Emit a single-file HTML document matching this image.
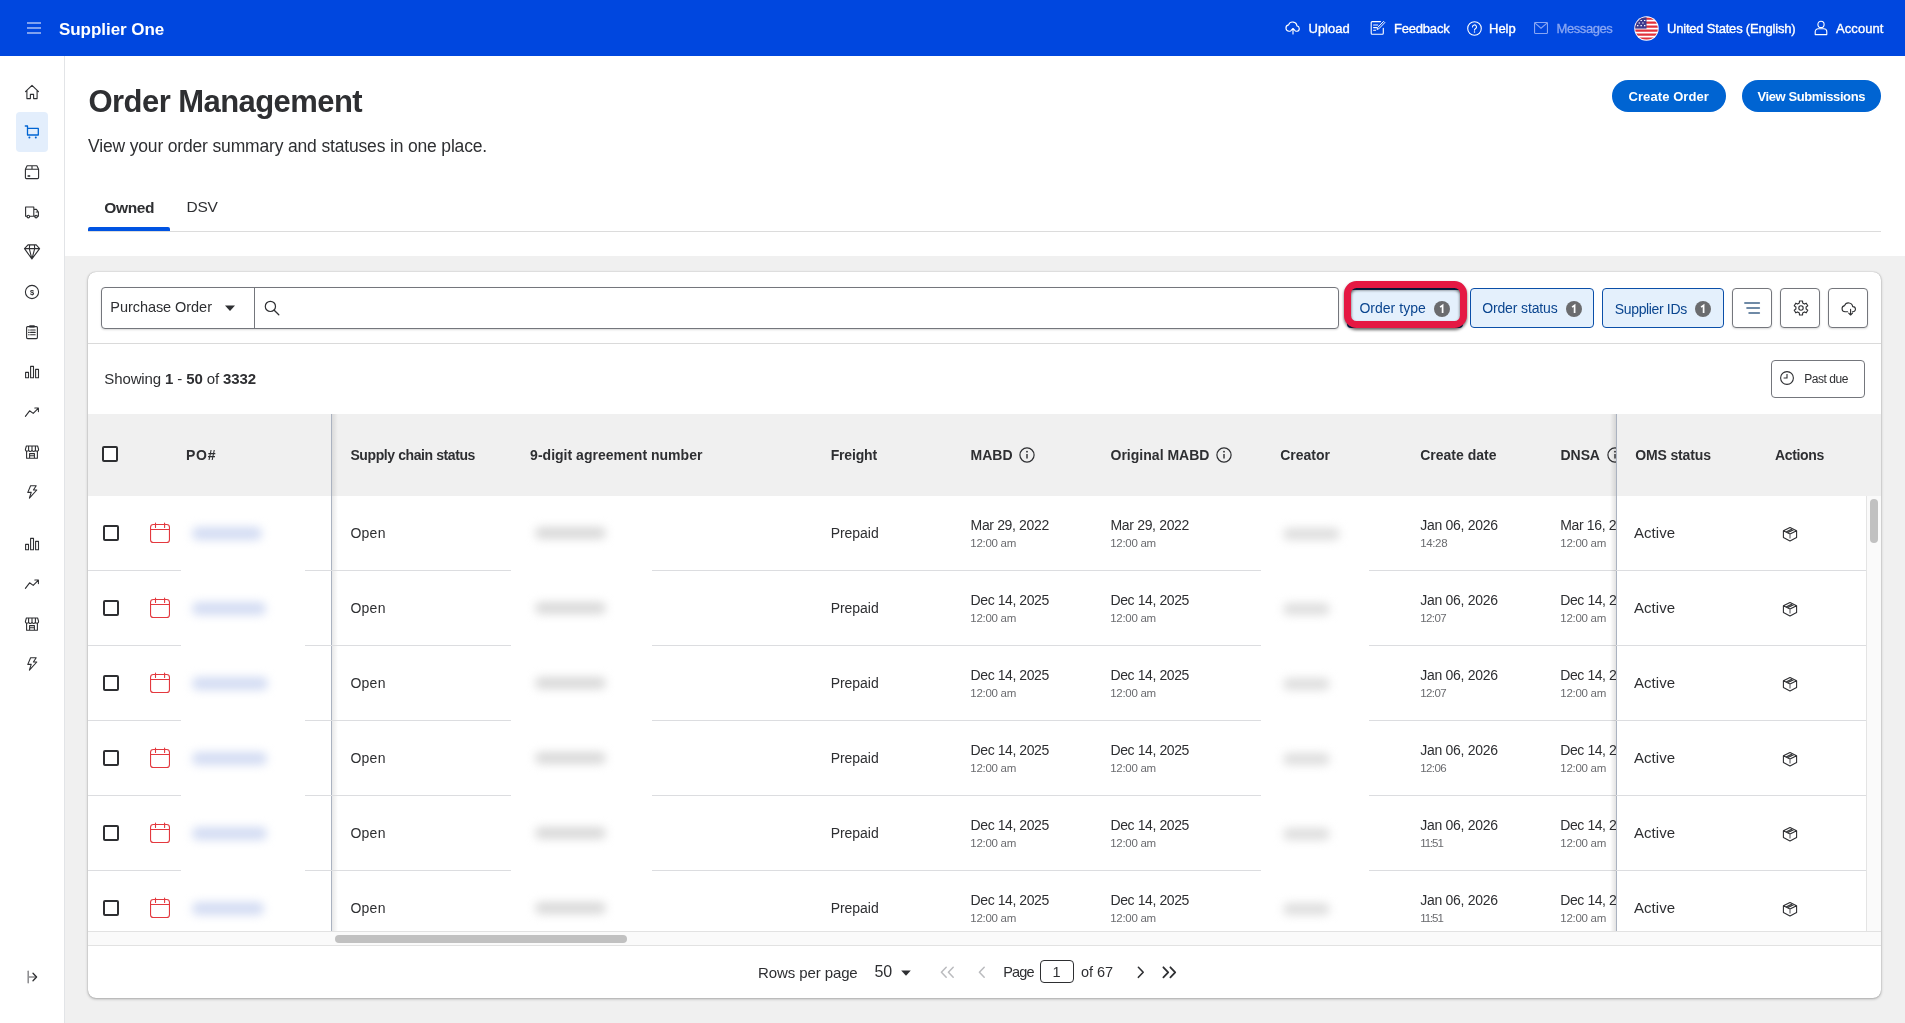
<!DOCTYPE html>
<html>
<head>
<meta charset="utf-8">
<title>Order Management</title>
<style>
*{box-sizing:border-box;margin:0;padding:0}
html,body{width:1905px;height:1023px;overflow:hidden;background:#fff}
body{font-family:"Liberation Sans",sans-serif;color:#2e2f32;position:relative;font-size:14px;line-height:1;will-change:transform}
.t{position:absolute;white-space:nowrap;line-height:1;display:block}
svg{position:absolute;display:block;overflow:visible}
#hdr{position:absolute;left:0;top:0;width:1905px;height:56px;background:#0047df}
#hdr .t{color:#fff}
#side{position:absolute;left:0;top:56px;width:65px;height:967px;background:#fff;border-right:1px solid #e2e4e7}
#grey{position:absolute;left:65px;top:256px;width:1840px;height:767px;background:#f0f0f0}
#card{position:absolute;left:88px;top:272px;width:1793px;height:726px;background:#fff;border-radius:8px;box-shadow:0 1px 3px rgba(0,0,0,.3),0 0 1px rgba(0,0,0,.32);overflow:hidden}
.pill{position:absolute;top:80px;height:32px;border-radius:16px;background:#0064d2}
.pill .t{color:#fff;font-weight:bold}
.chip{position:absolute;top:288px;height:40px;border:1px solid #0b4fa8;border-radius:4px;background:#e4f0fc}
.chip .t{color:#0b3f8c}
.badge{position:absolute;width:16px;height:16px;border-radius:8px;background:#4a4a4c;top:11px}
.ibtn{position:absolute;top:288px;width:40px;height:40px;border:1px solid #74767c;border-radius:4px;background:#fff;box-shadow:0 1px 2px rgba(0,0,0,.15)}
.cb{position:absolute;width:16px;height:16px;border:2px solid #2e2f32;border-radius:2px;background:#fff}
.hl{position:absolute;height:1px;background:#dcdde0}
.blur{position:absolute;filter:blur(5px);border-radius:6px}
.wipe{position:absolute;background:#fff}
</style>
</head>
<body>
<div id="hdr">
<svg style="left:27px;top:22px" width="14" height="12" viewBox="0 0 14 12"><path d="M0 1h14M0 6h14M0 11h14" stroke="#a9c0f5" stroke-width="1.3" fill="none"/></svg>
<div class="t" style="left:59px;top:20.6px;font-size:17px;font-weight:bold;letter-spacing:-0.05px">Supplier One</div>
<!-- upload -->
<svg style="left:1285px;top:21px" width="16" height="14" viewBox="0 0 16 14"><path d="M5.2 10.2H4.1a3.2 3.2 0 0 1-.5-6.35A4.3 4.3 0 0 1 11.9 4.9a2.7 2.7 0 0 1 .3 5.3h-1.4M8 13V7.5M5.900 9.600 8 7.500l2.100 2.100" stroke="#fff" stroke-width="1.15" fill="none" stroke-linecap="round" stroke-linejoin="round"/></svg>
<div class="t" style="left:1308.5px;top:22.4px;font-size:13px;-webkit-text-stroke:.35px #fff">Upload</div>
<!-- feedback -->
<svg style="left:1370px;top:20px" width="16" height="16" viewBox="0 0 16 16"><path d="M13.3 8.2v5a1 1 0 0 1-1 1H2.2a1 1 0 0 1-1-1V2.6a1 1 0 0 1 1-1h8.3M3.6 5h4.2M3.6 7.6h3M3.6 10.2h2" stroke="#fff" stroke-width="1.1" fill="none" stroke-linecap="round"/><path d="M13.6 1.4l1.2 1.2-6 6.2-1.8.6.6-1.8z" stroke="#fff" stroke-width="1" fill="none" stroke-linejoin="round"/></svg>
<div class="t" style="left:1394px;top:22.4px;font-size:13px;letter-spacing:-0.2px;-webkit-text-stroke:.35px #fff">Feedback</div>
<!-- help -->
<svg style="left:1466.5px;top:20.5px" width="15" height="15" viewBox="0 0 15 15"><circle cx="7.5" cy="7.5" r="6.8" stroke="#fff" stroke-width="1.1" fill="none"/><path d="M5.5 5.9a2 2 0 1 1 2.9 1.8c-.6.3-.9.7-.9 1.4" stroke="#fff" stroke-width="1.1" fill="none" stroke-linecap="round"/><circle cx="7.5" cy="11" r=".75" fill="#fff"/></svg>
<div class="t" style="left:1489px;top:22.4px;font-size:13px;-webkit-text-stroke:.35px #fff">Help</div>
<!-- messages -->
<svg style="left:1534px;top:22px" width="14" height="12" viewBox="0 0 14 12"><rect x=".55" y=".55" width="12.9" height="10.9" rx=".6" stroke="#88a6f3" stroke-width="1.1" fill="none"/><path d="M1 1.2l6 5 6-5" stroke="#88a6f3" stroke-width="1.1" fill="none"/></svg>
<div class="t" style="left:1556.5px;top:22.4px;font-size:13px;color:#88a6f3;letter-spacing:-0.42px;-webkit-text-stroke:.3px #88a6f3">Messages</div>
<!-- flag -->
<svg style="left:1634.3px;top:15.8px" width="25" height="25" viewBox="0 0 25 25"><defs><clipPath id="fc"><circle cx="12.5" cy="12.5" r="11.3"/></clipPath></defs><circle cx="12.5" cy="12.5" r="12.2" fill="#fff"/><g clip-path="url(#fc)"><rect width="25" height="25" fill="#fff"/><path d="M0 2.6h25M0 6.6h25M0 10.6h25M0 14.6h25M0 18.6h25M0 22.6h25" stroke="#e0323c" stroke-width="2.2"/><rect x="0" y="0" width="12.5" height="12.6" fill="#3c3b8e"/><path d="M3 4.5h1.4M6.5 4.5h1.4M10 4.5h1.4M4.6 7h1.4M8.2 7h1.4M3 9.6h1.4M6.5 9.6h1.4M10 9.6h1.4" stroke="#fff" stroke-width="1.2"/></g></svg>
<div class="t" style="left:1667px;top:22.4px;font-size:13px;letter-spacing:-0.2px;-webkit-text-stroke:.35px #fff">United States (English)</div>
<!-- account -->
<svg style="left:1814px;top:20px" width="14" height="16" viewBox="0 0 14 16"><circle cx="7" cy="4.4" r="3.1" stroke="#fff" stroke-width="1.1" fill="none"/><path d="M1.2 14.6v-2.8a3 3 0 0 1 3-3h5.6a3 3 0 0 1 3 3v2.8z" stroke="#fff" stroke-width="1.1" fill="none" stroke-linejoin="round"/></svg>
<div class="t" style="left:1836px;top:22.4px;font-size:13px;letter-spacing:.08px;-webkit-text-stroke:.35px #fff">Account</div>
</div>

<div id="side">
<div style="position:absolute;left:16px;top:56px;width:32px;height:40px;border-radius:4px;background:#e3eefc"></div>
<svg style="left:24.0px;top:28.0px" width="16" height="16" viewBox="0 0 16 16"><path d="M1.5 7.6 8 1.4l6.5 6.2M2.9 6.6v8h3.5v-4.2h3.2v4.2h3.5v-8" stroke="#2e2f32" stroke-width="1.1" fill="none" stroke-linecap="round" stroke-linejoin="round"/></svg>
<svg style="left:24.0px;top:68.0px" width="16" height="16" viewBox="0 0 16 16"><path d="M1.3 2h2.2v9h10.8V4.4H3.5" stroke="#0064d2" stroke-width="1.3" fill="none" stroke-linejoin="round" stroke-linecap="round"/><circle cx="5.4" cy="13.6" r="1" fill="#0064d2"/><circle cx="11.8" cy="13.6" r="1" fill="#0064d2"/></svg>
<svg style="left:24.0px;top:108.0px" width="16" height="16" viewBox="0 0 16 16"><path d="M1.4 5.2h13.2v8.4a1 1 0 0 1-1 1H2.4a1 1 0 0 1-1-1zM1.4 5.2l1.7-3.4h9.8l1.7 3.4M8 1.8v3.4" stroke="#2e2f32" stroke-width="1.1" fill="none" stroke-linecap="round" stroke-linejoin="round"/><path d="M3.6 12h2.6" stroke="#2e2f32" stroke-width="1.6"/></svg>
<svg style="left:24.0px;top:148.0px" width="16" height="16" viewBox="0 0 16 16"><path d="M3 12.2H1.6V3h8.2v9.2H5.6M9.8 5.4h2.6l2 2.6v4.2h-1.2M9.8 12.2h1.2M12.2 8h2" stroke="#2e2f32" stroke-width="1.1" fill="none" stroke-linecap="round" stroke-linejoin="round"/><circle cx="4.3" cy="12.6" r="1.3" stroke="#2e2f32" stroke-width="1.1" fill="none" stroke-linecap="round" stroke-linejoin="round"/><circle cx="12.1" cy="12.6" r="1.3" stroke="#2e2f32" stroke-width="1.1" fill="none" stroke-linecap="round" stroke-linejoin="round"/></svg>
<svg style="left:24.0px;top:188.0px" width="16" height="16" viewBox="0 0 16 16"><path d="M4 .9h8.200l3.400 3.700L7.900 15 .5 4.600zM.5 4.600h15.100M5.700 .9 5.300 4.600 7.900 15 10.700 4.600 10.400 .9" stroke="#2e2f32" stroke-width="1.1" fill="none" stroke-linecap="round" stroke-linejoin="round"/></svg>
<svg style="left:24.0px;top:228.0px" width="16" height="16" viewBox="0 0 16 16"><circle cx="8" cy="8" r="6.6" stroke="#2e2f32" stroke-width="1.1" fill="none" stroke-linecap="round" stroke-linejoin="round"/><text x="8" y="10.7" font-size="7.5" font-weight="bold" text-anchor="middle" fill="#2e2f32" font-family="Liberation Sans">$</text></svg>
<svg style="left:24.0px;top:268.0px" width="16" height="16" viewBox="0 0 16 16"><rect x="2.6" y="2.6" width="10.8" height="12" rx="1" stroke="#2e2f32" stroke-width="1.1" fill="none" stroke-linecap="round" stroke-linejoin="round"/><path d="M5.6 1.6h4.8v1.6H5.6z" fill="#2e2f32" stroke="#2e2f32" stroke-width=".6"/><path d="M6.6 6h4.6M6.6 8.4h4.6M6.6 10.8h4.6" stroke="#2e2f32" stroke-width="1.1" fill="none" stroke-linecap="round" stroke-linejoin="round"/><path d="M4.6 6h.6M4.6 8.4h.6M4.6 10.8h.6" stroke="#2e2f32" stroke-width="1.1" fill="none" stroke-linecap="round" stroke-linejoin="round"/></svg>
<svg style="left:24.0px;top:308.0px" width="16" height="16" viewBox="0 0 16 16"><rect x="1.6" y="8.4" width="2.9" height="5.4" stroke="#2e2f32" stroke-width="1.1" fill="none" stroke-linecap="round" stroke-linejoin="round"/><rect x="6.6" y="2.4" width="2.9" height="11.4" stroke="#2e2f32" stroke-width="1.1" fill="none" stroke-linecap="round" stroke-linejoin="round"/><rect x="11.6" y="5.4" width="2.9" height="8.4" stroke="#2e2f32" stroke-width="1.1" fill="none" stroke-linecap="round" stroke-linejoin="round"/></svg>
<svg style="left:24.0px;top:348.0px" width="16" height="16" viewBox="0 0 16 16"><path d="M1.4 12.4l4.2-5.6 3.6 2.6 5-5M10.8 4h3.6v3.6" stroke="#2e2f32" stroke-width="1.1" fill="none" stroke-linecap="round" stroke-linejoin="round"/></svg>
<svg style="left:24.0px;top:388.0px" width="16" height="16" viewBox="0 0 16 16"><path d="M2.6 7.2v7h10.8v-7M5.6 14.2V9.6h4.8v4.6M5.6 11.8h4.8" stroke="#2e2f32" stroke-width="1.1" fill="none" stroke-linecap="round" stroke-linejoin="round"/><path d="M2.4 2h11.2l1 3.4a1.6 1.6 0 0 1-3.2.4 1.7 1.7 0 0 1-3.4 0 1.7 1.7 0 0 1-3.4 0 1.6 1.6 0 0 1-3.2-.4zM4.6 2v3.6M8 2v3.6M11.4 2v3.6" stroke="#2e2f32" stroke-width="1.1" fill="none" stroke-linecap="round" stroke-linejoin="round"/></svg>
<svg style="left:24.0px;top:428.0px" width="16" height="16" viewBox="0 0 16 16"><path d="M6.6 1.8h5.6L9.4 6h3.4L5.4 14.2l1.8-5.8H3.8z" stroke="#2e2f32" stroke-width="1.1" fill="none" stroke-linecap="round" stroke-linejoin="round"/></svg>
<svg style="left:24.0px;top:480.0px" width="16" height="16" viewBox="0 0 16 16"><rect x="1.6" y="8.4" width="2.9" height="5.4" stroke="#2e2f32" stroke-width="1.1" fill="none" stroke-linecap="round" stroke-linejoin="round"/><rect x="6.6" y="2.4" width="2.9" height="11.4" stroke="#2e2f32" stroke-width="1.1" fill="none" stroke-linecap="round" stroke-linejoin="round"/><rect x="11.6" y="5.4" width="2.9" height="8.4" stroke="#2e2f32" stroke-width="1.1" fill="none" stroke-linecap="round" stroke-linejoin="round"/></svg>
<svg style="left:24.0px;top:520.0px" width="16" height="16" viewBox="0 0 16 16"><path d="M1.4 12.4l4.2-5.6 3.6 2.6 5-5M10.8 4h3.6v3.6" stroke="#2e2f32" stroke-width="1.1" fill="none" stroke-linecap="round" stroke-linejoin="round"/></svg>
<svg style="left:24.0px;top:560.0px" width="16" height="16" viewBox="0 0 16 16"><path d="M2.6 7.2v7h10.8v-7M5.6 14.2V9.6h4.8v4.6M5.6 11.8h4.8" stroke="#2e2f32" stroke-width="1.1" fill="none" stroke-linecap="round" stroke-linejoin="round"/><path d="M2.4 2h11.2l1 3.4a1.6 1.6 0 0 1-3.2.4 1.7 1.7 0 0 1-3.4 0 1.7 1.7 0 0 1-3.4 0 1.6 1.6 0 0 1-3.2-.4zM4.6 2v3.6M8 2v3.6M11.4 2v3.6" stroke="#2e2f32" stroke-width="1.1" fill="none" stroke-linecap="round" stroke-linejoin="round"/></svg>
<svg style="left:24.0px;top:600.0px" width="16" height="16" viewBox="0 0 16 16"><path d="M6.6 1.8h5.6L9.4 6h3.4L5.4 14.2l1.8-5.8H3.8z" stroke="#2e2f32" stroke-width="1.1" fill="none" stroke-linecap="round" stroke-linejoin="round"/></svg>
<svg style="left:24.0px;top:913.0px" width="16" height="16" viewBox="0 0 16 16"><path d="M4.2 2.2v11.6" stroke="#8a8a8d" stroke-width="1.5" fill="none" stroke-linecap="round"/><path d="M5 8h7" stroke="#8a8a8d" stroke-width="1.5" fill="none"/><path d="M9 4.2 12.6 8 9 11.8" stroke="#2e2f32" stroke-width="1.3" fill="none" stroke-linecap="round" stroke-linejoin="round"/></svg>
</div>
<div class="t" style="left:88.5px;top:85.66px;font-size:31px;font-weight:bold;letter-spacing:-0.556px;">Order Management</div>
<div class="t" style="left:88px;top:137.89px;font-size:17.5px;letter-spacing:-0.164px;">View your order summary and statuses in one place.</div>
<div class="t" style="left:104.2px;top:199.78px;font-size:15.5px;font-weight:bold;letter-spacing:-0.333px;">Owned</div>
<div class="t" style="left:186.6px;top:198.68px;font-size:15.5px;letter-spacing:-0.291px;">DSV</div>
<div style="position:absolute;left:88px;top:231px;width:1793px;height:1px;background:#dcdcdc"></div>
<div style="position:absolute;left:88px;top:227px;width:82px;height:4px;background:#0053e2;border-radius:2px 2px 0 0"></div>
<div class="pill" style="left:1612px;width:114px"><div class="t" style="left:16.5px;top:9.60px;font-size:13px;font-weight:bold;letter-spacing:0.085px;">Create Order</div></div>
<div class="pill" style="left:1742px;width:139px"><div class="t" style="left:15.5px;top:9.60px;font-size:13px;font-weight:bold;letter-spacing:-0.400px;">View Submissions</div></div>
<div id="grey"></div>
<div id="card"></div>
<div style="position:absolute;left:101px;top:287px;width:1238px;height:42px;border:1px solid #74767c;border-radius:4px;background:#fff;box-shadow:0 1px 2px rgba(0,0,0,.15)"></div>
<div style="position:absolute;left:254px;top:288px;width:1px;height:40px;background:#74767c"></div>
<div class="t" style="left:110.3px;top:299.73px;font-size:14.5px;letter-spacing:-0.053px;">Purchase Order</div>
<svg style="left:224px;top:304px" width="12" height="8" viewBox="0 0 12 8"><path d="M1 1.6h10L6 7z" fill="#2e2f32"/></svg>
<svg style="left:263px;top:299px" width="18" height="18" viewBox="0 0 18 18"><circle cx="7.4" cy="7.4" r="5.1" stroke="#2e2f32" stroke-width="1.2" fill="none"/><path d="M11.2 11.2l4.6 4.6" stroke="#2e2f32" stroke-width="1.3" stroke-linecap="round"/></svg>
<div class="chip" style="left:1347px;width:116px;border:2px solid #0b2d66"><div class="t" style="left:10.400000000000091px;top:11.15px;font-size:14px;color:#0a458f;letter-spacing:0.027px;">Order type</div><svg style="left:85px;top:10.5px" width="16" height="16" viewBox="0 0 16 16"><circle cx="8" cy="8" r="8" fill="#6b6c6e"/><path d="M6.1 6.1 8.6 4.3v7.6" stroke="#fff" stroke-width="1.7" fill="none" stroke-linejoin="miter"/></svg></div>
<div class="chip" style="left:1470px;width:124px"><div class="t" style="left:11.200000000000045px;top:12.15px;font-size:14px;color:#0a458f;letter-spacing:-0.135px;">Order status</div><svg style="left:95px;top:11.5px" width="16" height="16" viewBox="0 0 16 16"><circle cx="8" cy="8" r="8" fill="#6b6c6e"/><path d="M6.1 6.1 8.6 4.3v7.6" stroke="#fff" stroke-width="1.7" fill="none" stroke-linejoin="miter"/></svg></div>
<div class="chip" style="left:1602px;width:122px"><div class="t" style="left:11.799999999999955px;top:13.15px;font-size:14px;color:#0a458f;letter-spacing:-0.354px;">Supplier IDs</div><svg style="left:92px;top:11.5px" width="16" height="16" viewBox="0 0 16 16"><circle cx="8" cy="8" r="8" fill="#6b6c6e"/><path d="M6.1 6.1 8.6 4.3v7.6" stroke="#fff" stroke-width="1.7" fill="none" stroke-linejoin="miter"/></svg></div>
<div style="position:absolute;left:1344.2px;top:281px;width:123px;height:46.6px;border:7px solid #e51843;border-radius:12.5px;filter:drop-shadow(0 2.5px 1.6px rgba(0,0,0,.6))"></div>
<div class="ibtn" style="left:1732px"><svg style="left:11px;top:13px" width="16" height="12" viewBox="0 0 16 12"><path d="M1 1h14.200M3.100 6h12.100M5.200 11h10" stroke="#6f8aa6" stroke-width="1.9" fill="none" stroke-linecap="round"/></svg></div>
<div class="ibtn" style="left:1780px"><svg style="left:11.5px;top:11px" width="16" height="16" viewBox="0 0 16 16"><path d="M6.34 3.07 L6.45 1.07 L9.55 1.07 L9.66 3.07 L11.44 4.10 L13.23 3.19 L14.78 5.88 L13.10 6.97 L13.10 9.03 L14.78 10.12 L13.23 12.81 L11.44 11.90 L9.66 12.93 L9.55 14.93 L6.45 14.93 L6.34 12.93 L4.56 11.90 L2.77 12.81 L1.22 10.12 L2.90 9.03 L2.90 6.97 L1.22 5.88 L2.77 3.19 L4.56 4.10z" stroke="#2e2f32" stroke-width="1.1" fill="none" stroke-linejoin="round"/><circle cx="8" cy="8" r="2.2" stroke="#2e2f32" stroke-width="1.1" fill="none"/></svg></div>
<div class="ibtn" style="left:1828px"><svg style="left:11.500px;top:12.500px" width="16" height="14" viewBox="0 0 16 14"><path d="M6.600 9.800H4.100a3.100 3.100 0 0 1-.5-6.150A4.200 4.200 0 0 1 11.700 4.600a2.600 2.600 0 0 1 .3 5.200h-.6M9.600 7.400V13M7.700 11.100 9.600 13l1.900-1.900" stroke="#2e2f32" stroke-width="1.1" fill="none" stroke-linecap="round" stroke-linejoin="round"/></svg></div>
<div style="position:absolute;left:88px;top:343px;width:1793px;height:1px;background:#dadada"></div>
<div class="t" style="left:104.3px;top:371.10px;font-size:15px;letter-spacing:-0.12px;white-space:pre">Showing <b>1</b> - <b>50</b> of <b>3332</b></div>
<div style="position:absolute;left:1771px;top:360px;width:94px;height:38px;border:1px solid #74767c;border-radius:4px;background:#fff"></div>
<svg style="left:1779px;top:370px" width="16" height="16" viewBox="0 0 16 16"><circle cx="8" cy="8" r="6.4" stroke="#2e2f32" stroke-width="1.1" fill="none"/><path d="M8 4v4H4.6" stroke="#2e2f32" stroke-width="1.1" fill="none"/></svg>
<div class="t" style="left:1804.3px;top:372.94px;font-size:12px;letter-spacing:-0.458px;">Past due</div>
<div style="position:absolute;left:88px;top:414px;width:1793px;height:82px;background:#f0f0f0"></div>
<div style="position:absolute;left:1866px;top:496px;width:15px;height:435px;background:#fafafa;border-left:1px solid #e4e4e4"></div>
<div style="position:absolute;left:1869.5px;top:499px;width:8px;height:44px;border-radius:4px;background:#c1c1c1"></div>
<div class="t" style="left:186.1px;top:448.45px;font-size:14px;font-weight:bold;letter-spacing:0.662px;">PO#</div>
<div class="t" style="left:350.4px;top:448.45px;font-size:14px;font-weight:bold;letter-spacing:-0.402px;">Supply chain status</div>
<div class="t" style="left:530.1px;top:448.45px;font-size:14px;font-weight:bold;letter-spacing:0.016px;">9-digit agreement number</div>
<div class="t" style="left:830.7px;top:448.45px;font-size:14px;font-weight:bold;letter-spacing:-0.177px;">Freight</div>
<div class="t" style="left:970.6px;top:448.45px;font-size:14px;font-weight:bold;letter-spacing:0.002px;">MABD</div>
<div class="t" style="left:1110.5px;top:448.45px;font-size:14px;font-weight:bold;letter-spacing:0.017px;">Original MABD</div>
<div class="t" style="left:1280.2px;top:448.45px;font-size:14px;font-weight:bold;letter-spacing:-0.013px;">Creator</div>
<div class="t" style="left:1420.2px;top:448.45px;font-size:14px;font-weight:bold;letter-spacing:0.005px;">Create date</div>
<div class="t" style="left:1560.6px;top:448.45px;font-size:14px;font-weight:bold;letter-spacing:-0.093px;">DNSA</div>
<svg style="left:1019.3px;top:447px" width="16" height="16" viewBox="0 0 16 16"><circle cx="8" cy="8" r="7.1" stroke="#2e2f32" stroke-width="1.2" fill="none"/><path d="M8 7v4.6" stroke="#2e2f32" stroke-width="1.4"/><circle cx="8" cy="4.7" r=".9" fill="#2e2f32"/></svg>
<svg style="left:1215.9px;top:447px" width="16" height="16" viewBox="0 0 16 16"><circle cx="8" cy="8" r="7.1" stroke="#2e2f32" stroke-width="1.2" fill="none"/><path d="M8 7v4.6" stroke="#2e2f32" stroke-width="1.4"/><circle cx="8" cy="4.7" r=".9" fill="#2e2f32"/></svg>
<svg style="left:1606.8px;top:447px" width="16" height="16" viewBox="0 0 16 16"><circle cx="8" cy="8" r="7.1" stroke="#2e2f32" stroke-width="1.2" fill="none"/><path d="M8 7v4.6" stroke="#2e2f32" stroke-width="1.4"/><circle cx="8" cy="4.7" r=".9" fill="#2e2f32"/></svg>
<div style="position:absolute;left:332px;top:414px;width:6px;height:517px;background:linear-gradient(to right,rgba(0,0,0,.09),rgba(0,0,0,0))"></div>
<div style="position:absolute;left:331px;top:414px;width:1px;height:517px;background:#aab2c0"></div>
<div class="hl" style="left:88px;top:570px;width:1778px"></div>
<div class="cb" style="left:103px;top:525px"></div>
<svg style="left:150px;top:522px" width="20" height="22" viewBox="0 0 20 22"><rect x=".55" y="2.500" width="18.900" height="18" rx="2.800" stroke="#e3393f" stroke-width="1.1" fill="none"/><path d="M.55 7.500h18.900M5.500 1v4.500M14.600 1v4.500" stroke="#e3393f" stroke-width="1.1" fill="none" stroke-linecap="round"/></svg>
<div class="t" style="left:350.4px;top:526.25px;font-size:14px;letter-spacing:0.264px;">Open</div>
<div class="t" style="left:830.7px;top:526.25px;font-size:14px;letter-spacing:-0.036px;">Prepaid</div>
<div class="t" style="left:970.6px;top:518.35px;font-size:14px;letter-spacing:-0.357px;">Mar 29, 2022</div>
<div class="t" style="left:970.3px;top:537.57px;font-size:11.5px;color:#6a6b6f;letter-spacing:-0.281px;">12:00 am</div>
<div class="t" style="left:1110.5px;top:518.35px;font-size:14px;letter-spacing:-0.332px;">Mar 29, 2022</div>
<div class="t" style="left:1110.2px;top:537.57px;font-size:11.5px;color:#6a6b6f;letter-spacing:-0.281px;">12:00 am</div>
<div class="t" style="left:1420.2px;top:518.35px;font-size:14px;letter-spacing:-0.279px;">Jan 06, 2026</div>
<div class="t" style="left:1420.2px;top:537.57px;font-size:11.5px;color:#6a6b6f;letter-spacing:-0.355px;">14:28</div>
<div class="t" style="left:1560.3px;top:518.35px;font-size:14px;letter-spacing:-0.357px;">Mar 16, 2026</div>
<div class="t" style="left:1560.3px;top:537.57px;font-size:11.5px;color:#6a6b6f;letter-spacing:-0.281px;">12:00 am</div>
<div class="wipe" style="left:181px;top:556px;width:123.5px;height:30px"></div>
<div class="wipe" style="left:510.5px;top:556px;width:141.0px;height:30px"></div>
<div class="wipe" style="left:1260.5px;top:556px;width:108.5px;height:30px"></div>
<div class="blur" style="left:192px;top:527px;width:70px;height:13px;background:#d3dcf3"></div>
<div class="blur" style="left:535px;top:526.5px;width:71px;height:12px;background:#d9d9d9"></div>
<div class="blur" style="left:1283px;top:528px;width:57px;height:12px;background:#dedede"></div>
<div class="hl" style="left:88px;top:645px;width:1778px"></div>
<div class="cb" style="left:103px;top:600px"></div>
<svg style="left:150px;top:597px" width="20" height="22" viewBox="0 0 20 22"><rect x=".55" y="2.500" width="18.900" height="18" rx="2.800" stroke="#e3393f" stroke-width="1.1" fill="none"/><path d="M.55 7.500h18.900M5.500 1v4.500M14.600 1v4.500" stroke="#e3393f" stroke-width="1.1" fill="none" stroke-linecap="round"/></svg>
<div class="t" style="left:350.4px;top:601.25px;font-size:14px;letter-spacing:0.264px;">Open</div>
<div class="t" style="left:830.7px;top:601.25px;font-size:14px;letter-spacing:-0.036px;">Prepaid</div>
<div class="t" style="left:970.6px;top:593.35px;font-size:14px;letter-spacing:-0.423px;">Dec 14, 2025</div>
<div class="t" style="left:970.3px;top:612.57px;font-size:11.5px;color:#6a6b6f;letter-spacing:-0.281px;">12:00 am</div>
<div class="t" style="left:1110.5px;top:593.35px;font-size:14px;letter-spacing:-0.398px;">Dec 14, 2025</div>
<div class="t" style="left:1110.2px;top:612.57px;font-size:11.5px;color:#6a6b6f;letter-spacing:-0.281px;">12:00 am</div>
<div class="t" style="left:1420.2px;top:593.35px;font-size:14px;letter-spacing:-0.279px;">Jan 06, 2026</div>
<div class="t" style="left:1420.2px;top:612.57px;font-size:11.5px;color:#6a6b6f;letter-spacing:-0.555px;">12:07</div>
<div class="t" style="left:1560.3px;top:593.35px;font-size:14px;letter-spacing:-0.423px;">Dec 14, 2025</div>
<div class="t" style="left:1560.3px;top:612.57px;font-size:11.5px;color:#6a6b6f;letter-spacing:-0.281px;">12:00 am</div>
<div class="wipe" style="left:181px;top:631px;width:123.5px;height:30px"></div>
<div class="wipe" style="left:510.5px;top:631px;width:141.0px;height:30px"></div>
<div class="wipe" style="left:1260.5px;top:631px;width:108.5px;height:30px"></div>
<div class="blur" style="left:192px;top:602px;width:74px;height:13px;background:#d3dcf3"></div>
<div class="blur" style="left:535px;top:601.5px;width:71px;height:12px;background:#d9d9d9"></div>
<div class="blur" style="left:1283px;top:603px;width:47px;height:12px;background:#dedede"></div>
<div class="hl" style="left:88px;top:720px;width:1778px"></div>
<div class="cb" style="left:103px;top:675px"></div>
<svg style="left:150px;top:672px" width="20" height="22" viewBox="0 0 20 22"><rect x=".55" y="2.500" width="18.900" height="18" rx="2.800" stroke="#e3393f" stroke-width="1.1" fill="none"/><path d="M.55 7.500h18.900M5.500 1v4.500M14.600 1v4.500" stroke="#e3393f" stroke-width="1.1" fill="none" stroke-linecap="round"/></svg>
<div class="t" style="left:350.4px;top:676.25px;font-size:14px;letter-spacing:0.264px;">Open</div>
<div class="t" style="left:830.7px;top:676.25px;font-size:14px;letter-spacing:-0.036px;">Prepaid</div>
<div class="t" style="left:970.6px;top:668.35px;font-size:14px;letter-spacing:-0.423px;">Dec 14, 2025</div>
<div class="t" style="left:970.3px;top:687.57px;font-size:11.5px;color:#6a6b6f;letter-spacing:-0.281px;">12:00 am</div>
<div class="t" style="left:1110.5px;top:668.35px;font-size:14px;letter-spacing:-0.398px;">Dec 14, 2025</div>
<div class="t" style="left:1110.2px;top:687.57px;font-size:11.5px;color:#6a6b6f;letter-spacing:-0.281px;">12:00 am</div>
<div class="t" style="left:1420.2px;top:668.35px;font-size:14px;letter-spacing:-0.279px;">Jan 06, 2026</div>
<div class="t" style="left:1420.2px;top:687.57px;font-size:11.5px;color:#6a6b6f;letter-spacing:-0.555px;">12:07</div>
<div class="t" style="left:1560.3px;top:668.35px;font-size:14px;letter-spacing:-0.423px;">Dec 14, 2025</div>
<div class="t" style="left:1560.3px;top:687.57px;font-size:11.5px;color:#6a6b6f;letter-spacing:-0.281px;">12:00 am</div>
<div class="wipe" style="left:181px;top:706px;width:123.5px;height:30px"></div>
<div class="wipe" style="left:510.5px;top:706px;width:141.0px;height:30px"></div>
<div class="wipe" style="left:1260.5px;top:706px;width:108.5px;height:30px"></div>
<div class="blur" style="left:192px;top:677px;width:76px;height:13px;background:#d3dcf3"></div>
<div class="blur" style="left:535px;top:676.5px;width:71px;height:12px;background:#d9d9d9"></div>
<div class="blur" style="left:1283px;top:678px;width:47px;height:12px;background:#dedede"></div>
<div class="hl" style="left:88px;top:795px;width:1778px"></div>
<div class="cb" style="left:103px;top:750px"></div>
<svg style="left:150px;top:747px" width="20" height="22" viewBox="0 0 20 22"><rect x=".55" y="2.500" width="18.900" height="18" rx="2.800" stroke="#e3393f" stroke-width="1.1" fill="none"/><path d="M.55 7.500h18.900M5.500 1v4.500M14.600 1v4.500" stroke="#e3393f" stroke-width="1.1" fill="none" stroke-linecap="round"/></svg>
<div class="t" style="left:350.4px;top:751.25px;font-size:14px;letter-spacing:0.264px;">Open</div>
<div class="t" style="left:830.7px;top:751.25px;font-size:14px;letter-spacing:-0.036px;">Prepaid</div>
<div class="t" style="left:970.6px;top:743.35px;font-size:14px;letter-spacing:-0.423px;">Dec 14, 2025</div>
<div class="t" style="left:970.3px;top:762.57px;font-size:11.5px;color:#6a6b6f;letter-spacing:-0.281px;">12:00 am</div>
<div class="t" style="left:1110.5px;top:743.35px;font-size:14px;letter-spacing:-0.398px;">Dec 14, 2025</div>
<div class="t" style="left:1110.2px;top:762.57px;font-size:11.5px;color:#6a6b6f;letter-spacing:-0.281px;">12:00 am</div>
<div class="t" style="left:1420.2px;top:743.35px;font-size:14px;letter-spacing:-0.279px;">Jan 06, 2026</div>
<div class="t" style="left:1420.2px;top:762.57px;font-size:11.5px;color:#6a6b6f;letter-spacing:-0.555px;">12:06</div>
<div class="t" style="left:1560.3px;top:743.35px;font-size:14px;letter-spacing:-0.423px;">Dec 14, 2025</div>
<div class="t" style="left:1560.3px;top:762.57px;font-size:11.5px;color:#6a6b6f;letter-spacing:-0.281px;">12:00 am</div>
<div class="wipe" style="left:181px;top:781px;width:123.5px;height:30px"></div>
<div class="wipe" style="left:510.5px;top:781px;width:141.0px;height:30px"></div>
<div class="wipe" style="left:1260.5px;top:781px;width:108.5px;height:30px"></div>
<div class="blur" style="left:192px;top:752px;width:75px;height:13px;background:#d3dcf3"></div>
<div class="blur" style="left:535px;top:751.5px;width:71px;height:12px;background:#d9d9d9"></div>
<div class="blur" style="left:1283px;top:753px;width:47px;height:12px;background:#dedede"></div>
<div class="hl" style="left:88px;top:870px;width:1778px"></div>
<div class="cb" style="left:103px;top:825px"></div>
<svg style="left:150px;top:822px" width="20" height="22" viewBox="0 0 20 22"><rect x=".55" y="2.500" width="18.900" height="18" rx="2.800" stroke="#e3393f" stroke-width="1.1" fill="none"/><path d="M.55 7.500h18.900M5.500 1v4.500M14.600 1v4.500" stroke="#e3393f" stroke-width="1.1" fill="none" stroke-linecap="round"/></svg>
<div class="t" style="left:350.4px;top:826.25px;font-size:14px;letter-spacing:0.264px;">Open</div>
<div class="t" style="left:830.7px;top:826.25px;font-size:14px;letter-spacing:-0.036px;">Prepaid</div>
<div class="t" style="left:970.6px;top:818.35px;font-size:14px;letter-spacing:-0.423px;">Dec 14, 2025</div>
<div class="t" style="left:970.3px;top:837.57px;font-size:11.5px;color:#6a6b6f;letter-spacing:-0.281px;">12:00 am</div>
<div class="t" style="left:1110.5px;top:818.35px;font-size:14px;letter-spacing:-0.398px;">Dec 14, 2025</div>
<div class="t" style="left:1110.2px;top:837.57px;font-size:11.5px;color:#6a6b6f;letter-spacing:-0.281px;">12:00 am</div>
<div class="t" style="left:1420.2px;top:818.35px;font-size:14px;letter-spacing:-0.279px;">Jan 06, 2026</div>
<div class="t" style="left:1420.2px;top:837.57px;font-size:11.5px;color:#6a6b6f;letter-spacing:-1.084px;">11:51</div>
<div class="t" style="left:1560.3px;top:818.35px;font-size:14px;letter-spacing:-0.423px;">Dec 14, 2025</div>
<div class="t" style="left:1560.3px;top:837.57px;font-size:11.5px;color:#6a6b6f;letter-spacing:-0.281px;">12:00 am</div>
<div class="wipe" style="left:181px;top:856px;width:123.5px;height:30px"></div>
<div class="wipe" style="left:510.5px;top:856px;width:141.0px;height:30px"></div>
<div class="wipe" style="left:1260.5px;top:856px;width:108.5px;height:30px"></div>
<div class="blur" style="left:192px;top:827px;width:75px;height:13px;background:#d3dcf3"></div>
<div class="blur" style="left:535px;top:826.5px;width:71px;height:12px;background:#d9d9d9"></div>
<div class="blur" style="left:1283px;top:828px;width:47px;height:12px;background:#dedede"></div>
<div class="cb" style="left:103px;top:900px"></div>
<svg style="left:150px;top:897px" width="20" height="22" viewBox="0 0 20 22"><rect x=".55" y="2.500" width="18.900" height="18" rx="2.800" stroke="#e3393f" stroke-width="1.1" fill="none"/><path d="M.55 7.500h18.900M5.500 1v4.500M14.600 1v4.500" stroke="#e3393f" stroke-width="1.1" fill="none" stroke-linecap="round"/></svg>
<div class="t" style="left:350.4px;top:901.25px;font-size:14px;letter-spacing:0.264px;">Open</div>
<div class="t" style="left:830.7px;top:901.25px;font-size:14px;letter-spacing:-0.036px;">Prepaid</div>
<div class="t" style="left:970.6px;top:893.35px;font-size:14px;letter-spacing:-0.423px;">Dec 14, 2025</div>
<div class="t" style="left:970.3px;top:912.57px;font-size:11.5px;color:#6a6b6f;letter-spacing:-0.281px;">12:00 am</div>
<div class="t" style="left:1110.5px;top:893.35px;font-size:14px;letter-spacing:-0.398px;">Dec 14, 2025</div>
<div class="t" style="left:1110.2px;top:912.57px;font-size:11.5px;color:#6a6b6f;letter-spacing:-0.281px;">12:00 am</div>
<div class="t" style="left:1420.2px;top:893.35px;font-size:14px;letter-spacing:-0.279px;">Jan 06, 2026</div>
<div class="t" style="left:1420.2px;top:912.57px;font-size:11.5px;color:#6a6b6f;letter-spacing:-1.084px;">11:51</div>
<div class="t" style="left:1560.3px;top:893.35px;font-size:14px;letter-spacing:-0.423px;">Dec 14, 2025</div>
<div class="t" style="left:1560.3px;top:912.57px;font-size:11.5px;color:#6a6b6f;letter-spacing:-0.281px;">12:00 am</div>
<div class="blur" style="left:192px;top:902px;width:72px;height:13px;background:#d3dcf3"></div>
<div class="blur" style="left:535px;top:901.5px;width:71px;height:12px;background:#d9d9d9"></div>
<div class="blur" style="left:1283px;top:903px;width:47px;height:12px;background:#dedede"></div>
<div style="position:absolute;left:1617px;top:496px;width:249px;height:435px;background:#fff"></div>
<div style="position:absolute;left:1617px;top:414px;width:264px;height:82px;background:#f0f0f0"></div>
<div style="position:absolute;left:1610px;top:414px;width:6px;height:517px;background:linear-gradient(to right,rgba(0,0,0,0),rgba(0,0,0,.11))"></div>
<div style="position:absolute;left:1616px;top:414px;width:1px;height:517px;background:#aab2c0"></div>
<div class="t" style="left:1635.2px;top:448.45px;font-size:14px;font-weight:bold;letter-spacing:-0.141px;">OMS status</div>
<div class="t" style="left:1775px;top:448.45px;font-size:14px;font-weight:bold;letter-spacing:-0.333px;">Actions</div>
<div class="hl" style="left:1616px;top:570px;width:250px"></div>
<div class="t" style="left:1633.9px;top:525.00px;font-size:15px;letter-spacing:0.076px;">Active</div>
<svg style="left:1782px;top:524.8px" width="16" height="17" viewBox="0 0 16 17"><path d="M8 2.500 14.600 5.700v6.800L8 15.900 1.400 12.500V5.700zM1.400 5.700 8 9l6.600-3.300M4.040 7.020l6.600-3.240M5.490 7.750l6.600-3.270" stroke="#2e2f32" stroke-width="1.1" fill="none" stroke-linejoin="round"/><path d="M8 9v4.600" stroke="#8a8a8d" stroke-width="1.5" fill="none"/></svg>
<div class="hl" style="left:1616px;top:645px;width:250px"></div>
<div class="t" style="left:1633.9px;top:600.00px;font-size:15px;letter-spacing:0.076px;">Active</div>
<svg style="left:1782px;top:599.8px" width="16" height="17" viewBox="0 0 16 17"><path d="M8 2.500 14.600 5.700v6.800L8 15.900 1.400 12.500V5.700zM1.400 5.700 8 9l6.600-3.300M4.040 7.020l6.600-3.240M5.490 7.750l6.600-3.270" stroke="#2e2f32" stroke-width="1.1" fill="none" stroke-linejoin="round"/><path d="M8 9v4.600" stroke="#8a8a8d" stroke-width="1.5" fill="none"/></svg>
<div class="hl" style="left:1616px;top:720px;width:250px"></div>
<div class="t" style="left:1633.9px;top:675.00px;font-size:15px;letter-spacing:0.076px;">Active</div>
<svg style="left:1782px;top:674.8px" width="16" height="17" viewBox="0 0 16 17"><path d="M8 2.500 14.600 5.700v6.800L8 15.900 1.400 12.500V5.700zM1.400 5.700 8 9l6.600-3.300M4.040 7.020l6.600-3.240M5.490 7.750l6.600-3.270" stroke="#2e2f32" stroke-width="1.1" fill="none" stroke-linejoin="round"/><path d="M8 9v4.600" stroke="#8a8a8d" stroke-width="1.5" fill="none"/></svg>
<div class="hl" style="left:1616px;top:795px;width:250px"></div>
<div class="t" style="left:1633.9px;top:750.00px;font-size:15px;letter-spacing:0.076px;">Active</div>
<svg style="left:1782px;top:749.8px" width="16" height="17" viewBox="0 0 16 17"><path d="M8 2.500 14.600 5.700v6.800L8 15.900 1.400 12.500V5.700zM1.400 5.700 8 9l6.600-3.300M4.040 7.020l6.600-3.240M5.490 7.750l6.600-3.270" stroke="#2e2f32" stroke-width="1.1" fill="none" stroke-linejoin="round"/><path d="M8 9v4.600" stroke="#8a8a8d" stroke-width="1.5" fill="none"/></svg>
<div class="hl" style="left:1616px;top:870px;width:250px"></div>
<div class="t" style="left:1633.9px;top:825.00px;font-size:15px;letter-spacing:0.076px;">Active</div>
<svg style="left:1782px;top:824.8px" width="16" height="17" viewBox="0 0 16 17"><path d="M8 2.500 14.600 5.700v6.800L8 15.900 1.400 12.500V5.700zM1.400 5.700 8 9l6.600-3.300M4.040 7.020l6.600-3.240M5.490 7.750l6.600-3.270" stroke="#2e2f32" stroke-width="1.1" fill="none" stroke-linejoin="round"/><path d="M8 9v4.600" stroke="#8a8a8d" stroke-width="1.5" fill="none"/></svg>
<div class="t" style="left:1633.9px;top:900.00px;font-size:15px;letter-spacing:0.076px;">Active</div>
<svg style="left:1782px;top:899.8px" width="16" height="17" viewBox="0 0 16 17"><path d="M8 2.500 14.600 5.700v6.800L8 15.900 1.400 12.500V5.700zM1.400 5.700 8 9l6.600-3.300M4.040 7.020l6.600-3.240M5.490 7.750l6.600-3.270" stroke="#2e2f32" stroke-width="1.1" fill="none" stroke-linejoin="round"/><path d="M8 9v4.600" stroke="#8a8a8d" stroke-width="1.5" fill="none"/></svg>
<div class="cb" style="left:102px;top:446px"></div>
<div style="position:absolute;left:88px;top:931px;width:1793px;height:15px;background:#fafafa;border-top:1px solid #e2e2e2;border-bottom:1px solid #e2e2e2"></div>
<div style="position:absolute;left:335px;top:934.5px;width:292px;height:8px;border-radius:4px;background:#c1c1c1"></div>
<div style="position:absolute;left:88px;top:946px;width:1793px;height:44px;background:#fff"></div>
<div class="t" style="left:758.1px;top:964.90px;font-size:15px;letter-spacing:-0.106px;">Rows per page</div>
<div class="t" style="left:874.5px;top:964.16px;font-size:16px;letter-spacing:-0.098px;">50</div>
<svg style="left:899.5px;top:968.5px" width="12" height="8" viewBox="0 0 12 8"><path d="M1.2 1.4h9.6L6 6.8z" fill="#2e2f32"/></svg>
<svg style="left:939.5px;top:965.8px" width="16" height="13" viewBox="0 0 16 13"><path d="M6.200 1.300 1.400 6.300 6.200 11.300 M13.200 1.300 8.400 6.300 13.200 11.300" stroke="#babbbe" stroke-width="1.5" fill="none" stroke-linecap="round" stroke-linejoin="round"/></svg>
<svg style="left:977.5px;top:965.8px" width="8" height="13" viewBox="0 0 8 13"><path d="M6.200 1.300 1.400 6.300 6.200 11.300" stroke="#babbbe" stroke-width="1.5" fill="none" stroke-linecap="round" stroke-linejoin="round"/></svg>
<div class="t" style="left:1003.2px;top:965.33px;font-size:14.5px;letter-spacing:-0.791px;">Page</div>
<div style="position:absolute;left:1040px;top:960px;width:34px;height:23px;border:1.5px solid #2e2f32;border-radius:4px;background:#fff"></div>
<div class="t" style="left:1052.5px;top:965.03px;font-size:14.5px;">1</div>
<div class="t" style="left:1081px;top:965.33px;font-size:14.5px;letter-spacing:-0.049px;">of 67</div>
<svg style="left:1136.5px;top:965.8px" width="8" height="13" viewBox="0 0 8 13"><path d="M1.400 1.300 6.200 6.300 1.400 11.300" stroke="#2e2f32" stroke-width="1.6" fill="none" stroke-linecap="round" stroke-linejoin="round"/></svg>
<svg style="left:1162.3px;top:965.8px" width="16" height="13" viewBox="0 0 16 13"><path d="M1.400 1.300 6.200 6.300 1.400 11.300 M8.400 1.300 13.200 6.300 8.400 11.300" stroke="#2e2f32" stroke-width="1.8" fill="none" stroke-linecap="round" stroke-linejoin="round"/></svg>
</body>
</html>
